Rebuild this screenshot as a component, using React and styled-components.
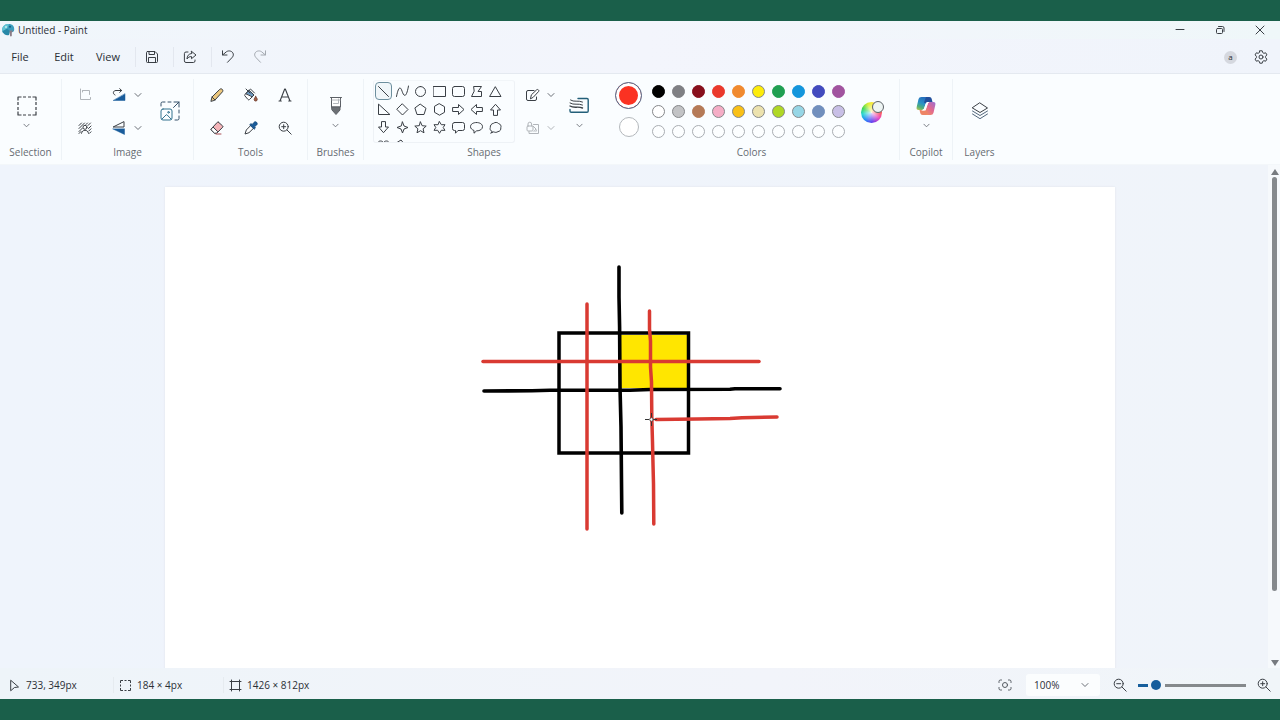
import React from "react";
import styled, { createGlobalStyle } from "styled-components";

const GlobalStyle = createGlobalStyle`
  * { box-sizing: border-box; }
  body { margin: 0; font-family: "Open Sans", "Noto Sans", sans-serif; color: #2b2f36; }
  button, select, input { font: inherit; color: inherit; }
`;

const Desktop = styled.div`
  height: 100vh;
  display: flex;
  flex-direction: column;
  padding: 21px 0;
  background: #1a5f4a;
`;

const AppWindow = styled.div`
  flex: 1;
  min-height: 0;
  display: flex;
  flex-direction: column;
  background: #eff4fa;
`;

const TitleBar = styled.header`
  display: flex;
  align-items: center;
  height: 18px;
  padding-left: 1px;
  gap: 3px;
  background: linear-gradient(90deg, #f0f6fb, #f3f5fc 50%, #eff7f9);
`;

const Title = styled.h1`
  margin: 0;
  flex: 1;
  font-size: 10px;
  line-height: 18px;
  font-weight: 400;
`;

const IconButton = styled.button`
  display: flex;
  align-items: center;
  justify-content: center;
  width: ${(p) => p.$w || 24}px;
  height: ${(p) => p.$h || 24}px;
  padding: 0;
  border: 0;
  background: none;
  flex: none;
  opacity: ${(p) => (p.disabled ? 0.5 : 1)};
`;

const MenuBar = styled.nav`
  display: flex;
  align-items: center;
  height: 34px;
  padding: 2px 7px 0 0;
  background: linear-gradient(90deg, #f0f5fb, #f3f5fc 50%, #f0f4fb);
`;

const MenuButton = styled.button`
  width: 44px;
  padding: 0;
  border: 0;
  background: none;
  font-size: 11px;
  line-height: 20px;
  text-align: center;
`;

const MenuGroup = styled.div`
  display: flex;
  padding: 0 5px 0 0;
  margin-left: ${(p) => p.$start || 0}px;
  border-right: ${(p) => (p.$last ? "0" : "1px solid #e3e7ef")};
`;

const Spacer = styled.div`
  flex: 1;
`;

const Avatar = styled.button`
  width: 13px;
  height: 13px;
  padding: 0;
  margin-right: 12px;
  border: 0;
  border-radius: 50%;
  background: #d5d8df;
  font-size: 8px;
  line-height: 12px;
`;

const Ribbon = styled.section`
  display: flex;
  flex: none;
  height: 92px;
  padding: 5px 0 4px;
  border-top: 1px solid #e4e9f0;
  border-bottom: 1px solid #f3f7fa;
  background: #fafdff;
`;

const Group = styled.div`
  display: flex;
  flex-direction: column;
  gap: 1px;
  flex: none;
  width: ${(p) => p.$w}px;
  border-right: ${(p) => (p.$plain ? "0" : "1px solid #eef3f7")};
`;

const GroupBody = styled.div`
  display: flex;
  align-items: center;
  justify-content: ${(p) => (p.$start ? "flex-start" : "center")};
  gap: ${(p) => p.$gap || 0}px;
  height: 64px;
  padding: 0 ${(p) => p.$right || 0}px 0 ${(p) => p.$start || 0}px;
`;

const GroupLabel = styled.div`
  font-size: 10px;
  line-height: 16px;
  text-align: center;
  color: #666b72;
`;

const Stack = styled.div`
  display: flex;
  flex-direction: column;
  align-items: center;
  gap: ${(p) => p.$gap || 0}px;
  padding-bottom: ${(p) => p.$lift || 0}px;
`;

const ToolGrid = styled.div`
  display: grid;
  grid-template-columns: ${(p) => p.$cols};
  gap: 9px ${(p) => p.$gap || 0}px;
  justify-items: center;
`;

const Split = styled.div`
  display: flex;
`;

const ShapeBox = styled.div`
  align-self: stretch;
  display: grid;
  grid-template-columns: repeat(7, 1fr);
  grid-auto-rows: 18px;
  row-gap: 0;
  width: 142px;
  margin-top: 1px;
  padding: 1px 9px 0 0;
  overflow: hidden;
  border: 1px solid #eef2f6;
  border-top-color: #f2f6f9;
  border-radius: 3px;
`;

const ShapeButton = styled.button`
  display: flex;
  align-items: center;
  justify-content: center;
  padding: 0;
  margin: 0 1px;
  border: 1px solid ${(p) => (p.$on ? "#6d8f9e" : "transparent")};
  border-radius: 4px;
  background: ${(p) => (p.$on ? "#f0f6f9" : "none")};
`;

const CurrentColor = styled.button`
  width: ${(p) => p.$size}px;
  height: ${(p) => p.$size}px;
  padding: 0;
  border: 1px solid ${(p) => p.$line};
  border-radius: 50%;
  background: ${(p) => p.$color};
  box-shadow: inset 0 0 0 ${(p) => p.$ring}px #fff;
`;

const SwatchGrid = styled.div`
  display: grid;
  grid-template-columns: repeat(10, 20px);
  grid-auto-rows: 20px;
  place-items: center;
`;

const Swatch = styled.button`
  width: 13px;
  height: 13px;
  padding: 0;
  border: 1px solid ${(p) => p.$line};
  border-radius: 50%;
  background: ${(p) => p.$color};
`;

const Workspace = styled.main`
  flex: 1;
  min-height: 0;
  display: grid;
  grid-template-columns: 12px 1fr 12px;
  background: linear-gradient(90deg, #eff4fc, #f0f4fa);
`;

const Viewport = styled.div`
  grid-column: 2;
  display: flex;
  justify-content: center;
  align-items: flex-start;
  min-height: 0;
  padding-top: 22px;
  overflow: hidden;
`;

const Drawing = styled.svg`
  width: 100%;
  max-width: 950px;
  height: auto;
  background: #fff;
  flex: none;
  box-shadow: 0 0 2px #dfe4ea;
`;

const ScrollBar = styled.div`
  display: flex;
  flex-direction: column;
  align-items: center;
  gap: 2px;
  padding: 4px 0 2px 1px;
  background: #f6f9fc;
`;

const ScrollTrack = styled.div`
  flex: 1;
  width: 5px;
`;

const ScrollThumb = styled.div`
  width: 5px;
  height: 86%;
  border-radius: 3px;
  background: #85898d;
`;

const StatusBar = styled.footer`
  display: flex;
  align-items: center;
  flex: none;
  height: 31px;
  padding: 3px 5px 0 8px;
  background: linear-gradient(90deg, #eef4f9, #f2f4fa 60%, #f0f5f9);
  font-size: 10px;
  line-height: 16px;
`;

const StatusItem = styled.div`
  display: flex;
  align-items: center;
  gap: 5px;
  width: ${(p) => p.$w}px;
  padding-left: ${(p) => p.$pad || 0}px;
  border-left: ${(p) => (p.$pad ? "1px solid #e6ebf0" : "0")};
`;

const SelectWrap = styled.label`
  display: grid;
  align-items: center;
  width: 74px;
  height: 22px;
  margin: 0 9px 0 8px;
  border-radius: 3px;
  background: #fbfdfe;
  > * { grid-area: 1 / 1; }
  > svg { justify-self: end; margin-right: 11px; pointer-events: none; }
`;

const ZoomSelect = styled.select`
  width: 100%;
  height: 22px;
  padding: 0 0 0 8px;
  border: 0;
  background: none;
  appearance: none;
`;

const ZoomSlider = styled.input`
  width: 108px;
  height: 12px;
  margin: 0 7px;
  appearance: none;
  border-radius: 2px;
  background: linear-gradient(90deg, #175e9c 10px, transparent 10px, transparent 27px, #85898c 27px) center / 100% 3px no-repeat;
  &::-webkit-slider-thumb {
    appearance: none;
    width: 10px;
    height: 10px;
    border-radius: 50%;
    background: #175e9c;
  }
`;

const Glyph = ({ s = 16, box = s, w = 1, color = "#3a3f45", children }) => (
  <svg width={s} height={s} viewBox={`0 0 ${box} ${box}`} fill="none" stroke={color} strokeWidth={w}
    strokeLinecap="round" strokeLinejoin="round" aria-hidden="true">
    {children}
  </svg>
);

const Chevron = ({ s = 8, color = "#6a6f76" }) => (
  <Glyph s={s} box={8} color={color}><path d="M1 2.500 4 5.500 7 2.500" /></Glyph>
);

const PaintLogo = () => (
  <svg width="14" height="14" viewBox="0 0 14 14" aria-hidden="true">
    <path d="M7.500 1C11 .8 13.500 3 13.200 6.500c-.1 2-1 2.500-2.200 2.700L7 8 2 10C.8 8 .8 5.500 2.200 3.500 3.500 1.800 5.500 1 7.500 1z" fill="#3b9dbd" />
    <path d="M2.200 3.500C3.800 1.400 6 .8 8 1L6 6 1.400 8C1 6.400 1.200 4.900 2.200 3.500z" fill="#62c5d4" />
    <path d="M1.500 8.500 6 5.500l3 3-1 3.500c-3 .8-5.500-1-6.500-3.500z" fill="#2889a8" />
    <path d="M8.500 7.500h3.500L10.800 9.500v3c0 1.200-1.800 1.200-1.800 0z" fill="#8a7c86" />
    <circle cx="5" cy="4" r="1" fill="#c9eef2" />
    <circle cx="9" cy="3.800" r="1" fill="#175c85" />
  </svg>
);

const SaveIcon = () => (
  <Glyph s={14}>
    <path d="M2.500 1.500h7.500l2.500 2.500v7.500a1 1 0 0 1-1 1h-9a1 1 0 0 1-1-1v-9a1 1 0 0 1 1-1z" />
    <path d="M4 1.500v3h5.500v-3M3.500 12.500V7.500h7v5" />
  </Glyph>
);
const ShareIcon = () => (
  <Glyph s={14}>
    <path d="M5 2H3a1.600 1.600 0 0 0-1.600 1.600v7.300A1.600 1.600 0 0 0 3 12.500h7.400a1.600 1.600 0 0 0 1.600-1.600V10" />
    <path d="M8.500 1.300 13 5 8.500 8.700V6.600C6.500 6.500 5 7.300 4 9c0-3 1.700-5.300 4.500-5.500z" />
  </Glyph>
);
const UndoIcon = ({ flip }) => (
  <Glyph s={14} color={flip ? "#a4a9b0" : "#3a3f45"}>
    <g transform={flip ? "matrix(-1 0 0 1 14 0)" : undefined}>
      <path d="M1.500 .8V5H6M1.800 4.800 5.500 1.700C8 0 11.800 1.200 12.300 4.100c.2 1.600-.5 2.700-1.500 3.700L6.500 12.300" />
    </g>
  </Glyph>
);
const GearIcon = () => (
  <Glyph s={14}>
    <circle cx="7" cy="7" r="2" />
    <path d="M5.800.8h2.400l.5 1.800 1.200.7 1.800-.5 1.200 2.100L11.600 6.300v1.400l1.300 1.400-1.200 2.100-1.800-.5-1.200.7-.5 1.800H5.800l-.5-1.800-1.200-.7-1.800.5-1.200-2.100 1.300-1.400V6.300L1.100 4.900l1.200-2.100 1.800.5 1.200-.7z" />
  </Glyph>
);

const SelectIcon = () => (
  <Glyph s={20}>
    <path strokeWidth="1.200" strokeLinecap="butt" d="M1 4.500V1h3.500M6 1h3M11 1h3M15.500 1H19v3.500M19 6v3M19 11v3M19 15.500V19h-3.500M14 19h-3M9 19H6M4.500 19H1v-3.500M1 14v-3M1 9V6" />
  </Glyph>
);
const CropIcon = () => (
  <Glyph s={14} color="#6b7077"><path d="M2.500 1v10.500H12.500V9.500M5 2.500h6.500v4M4.500 2.500V4" /></Glyph>
);
const RotateIcon = () => (
  <Glyph s={14}>
    <path d="M13 6v6.500H1.500z" fill="#195c9b" stroke="#195c9b" strokeWidth=".5" />
    <path d="M3 7C.3 5.800 1 2.500 4 2.500h5.500M7.700.7 9.700 2.500 7.700 4.300" />
  </Glyph>
);
const FlipIcon = () => (
  <Glyph s={14}>
    <path d="M12 1v5H1.500z" />
    <path d="M12.500 8v5.500L1 8z" fill="#195c9b" stroke="#195c9b" strokeWidth=".5" />
  </Glyph>
);
const RemoveBgIcon = () => (
  <Glyph s={14}>
    <path d="M1 4.500 3.500 2M1 7.500 6.500 2M1 10.500l3.500-3.500M8 3.500 9.500 2M10 4.500 12.500 2M10.500 7.500 13 5M10.800 10l2.200-2.200M1 12.500l2-2M11.500 12.300l1.500-1.500" />
    <circle cx="7" cy="6.300" r="2" fill="#fff" />
    <path d="M3.500 12.300c.4-2 1.700-3 3.500-3s3.100 1 3.500 3" />
  </Glyph>
);
const ResizeIcon = () => (
  <Glyph s={20} color="#35506a">
    <path d="M1 5V2.500A1.500 1.500 0 0 1 2.500 1H5M8 1h3M19 9v3M19 15v2.500a1.500 1.500 0 0 1-1.500 1.500H15" />
    <path d="M14 1H19v5M19 1l-5.500 5.500" />
    <g stroke="#32738f">
      <rect x="1" y="8" width="11" height="11" rx="2" />
      <path d="M2 18l4-4c.4-.4.8-.4 1.200 0L11 18" /><circle cx="8.500" cy="11.300" r=".8" />
    </g>
  </Glyph>
);
const PencilIcon = () => (
  <Glyph s={14}>
    <path d="M1 13l1-4L9.700 1.400c.8-.8 1.900-.7 2.600 0s.8 1.800 0 2.600L5 12z" fill="#ecc77d" />
    <path d="M2 9l3 3" />
  </Glyph>
);
const BucketIcon = () => (
  <Glyph s={14}>
    <path d="M5 2.500 10 7 5.500 11.500c-.5.5-1 .5-1.500 0L1 8c-.5-.5-.4-1 0-1.500z" fill="#fff" />
    <path d="M2 5.500 5 2.500l5 4.500-1.500 1.500z" fill="#6d9bc4" />
    <path d="M2 1l4 4M5 2.500 6.500 1l4 4" />
    <path d="M11.700 8.500c.8 1.300 1.500 2 1.500 3a1.500 1.500 0 0 1-3 0c0-1 .7-1.700 1.500-3z" fill="#a35e45" stroke="#764536" />
  </Glyph>
);
const TextIcon = () => (
  <Glyph s={14} w={1.1}><path d="M2 13 6.700 1h.6L12 13M3.800 9h6.400M1 13h2.300M10.700 13H13" /></Glyph>
);
const EraserIcon = () => (
  <Glyph s={14}>
    <path d="M8.600 1.300 12.700 5c.4.400.4.800 0 1.200L7 12H4.500L1.300 9c-.4-.4-.4-.8 0-1.200l6-6.500c.4-.4.9-.4 1.300 0z" fill="#f4b4b9" />
    <path d="M1.300 8 3 6l4.900 4.800L6.500 12.200h-2L1.300 9z" fill="#fff" /><path d="M6 13h5" stroke="#a84b50" />
  </Glyph>
);
const DropperIcon = () => (
  <Glyph s={14}>
    <path d="M7 4.200 2.300 9 1 13l4-1.300L9.800 7z" fill="#fff" />
    <path d="M6 3.500l1-.8 1.200.9L10 1.400c1.800-1.700 4.300.8 2.600 2.600l-2.200 1.800 1 1.200-1 1z" fill="#195c9b" stroke="#184e80" />
  </Glyph>
);
const MagnifierIcon = ({ minus }) => (
  <Glyph s={14}>
    <circle cx="5.700" cy="5.700" r="4.500" /><path d="M9 9l4.200 4.200M3.700 5.700h4" />{!minus && <path d="M5.700 3.700v4" />}
  </Glyph>
);
const BrushIcon = () => (
  <Glyph s={20} color="#5c6066">
    <path d="M4.500 1.500h11M5.500 1.500V11h9V1.500" fill="#fff" /><path d="M6 4h8M7.500 7.500h5V3" stroke="#b4b8bd" />
    <path d="M6 11h8v3l-4 4.500L6 14z" fill="#6c7075" />
  </Glyph>
);
const OutlineIcon = () => (
  <Glyph s={16}>
    <path d="M9 3.500H3A1.500 1.500 0 0 0 1.500 5v7A1.500 1.500 0 0 0 3 13.500h7a1.500 1.500 0 0 0 1.500-1.500v-2" />
    <path d="M5.500 11.500l.9-3.700 5.300-5c1-1 2.900.7 1.900 1.700L8.500 10z" fill="#fff" />
  </Glyph>
);
const FillIcon = () => (
  <Glyph s={16} color="#6b7077">
    <path d="M8.500 4.500h5v9H4V11.500" /><rect x="2" y="6" width="6" height="5" rx="1" />
    <path d="M3 6V4a1.800 1.800 0 0 1 3.600 0v2M8 6l3 3-2 2.500M11 9.500c.7 1 .7 2 0 2" />
  </Glyph>
);
const SizeIcon = () => (
  <Glyph s={20} color="#235f79">
    <path strokeWidth="1.400" d="M9 2.500h9a1.200 1.200 0 0 1 1.200 1.200V15A1.200 1.200 0 0 1 18 16.200H2.200A1.200 1.200 0 0 1 1 15V13.500" />
    <g stroke="#3b4046"><path d="M1.500 4c3.500 2.500 7.500 0 12 2M1 7c4 2.500 8 0 12.500 2" /><path strokeWidth="1.400" d="M1 10c4 2.500 8 0 12.500 2" /></g>
  </Glyph>
);
const LayersIcon = () => (
  <Glyph s={18}>
    <path d="M9 1 16.500 6 9 10.500 1.500 6z" /><path d="M1.500 9 9 13.500 16.500 9M1.500 12 9 16.700 16.500 12" stroke="#52677c" />
  </Glyph>
);
const CopilotIcon = () => (
  <svg width="20" height="20" viewBox="0 0 20 20" aria-hidden="true">
    <defs>
      <linearGradient id="copilotStart" x1="0" y1="1" x2="0.4" y2="0">
        <stop offset="0" stopColor="#c3c94c" /><stop offset=".3" stopColor="#4dae7c" /><stop offset=".6" stopColor="#2a91c6" /><stop offset="1" stopColor="#2671bd" />
      </linearGradient>
      <linearGradient id="copilotEnd" x1="1" y1="0" x2="0.1" y2="1">
        <stop offset="0" stopColor="#9a6fd4" /><stop offset=".5" stopColor="#e2688f" /><stop offset="1" stopColor="#f2965a" />
      </linearGradient>
    </defs>
    <path d="M5.500 1h7l-1.700 3.800L8.300 12c-.5 1.400-1.200 2-2.700 2H2.700C.8 14 .2 12.700.7 11l1.700-7.500C2.900 1.800 3.800 1 5.500 1z" fill="url(#copilotStart)" />
    <path d="M10 1h3.300c1.500 0 2.100.8 2.500 2.200l.7 2.800H12c-1.200 0-1.900.6-2.400 1.600L8 6.500z" fill="#224f9c" />
    <path d="M14.500 19h-7l1.700-3.800L11.700 8c.5-1.400 1.200-2 2.700-2h2.900c1.900 0 2.500 1.300 2 3l-1.700 7.500c-.5 1.700-1.400 2.500-3.100 2.500z" fill="url(#copilotEnd)" />
    <path d="M10 19H6.700c-1.500 0-2.100-.8-2.500-2.200L3.500 14H6c2.500 0 3 1 4.500.5l1 1z" fill="#ee8465" />
    <path d="M9.700 7.600C10.200 6.500 11 6 12 6h2.400c-1.500 0-2.200.6-2.700 2L10 13c-.3.900-1.300 1.700-2.500 1.700-1 0-2-.1-2.400-.7.9 0 2.100 0 2.900-1.500z" fill="#fafdff" />
  </svg>
);
const Wheel = styled.span`
  position: relative;
  width: 21px;
  height: 21px;
  margin-top: 2px;
  border-radius: 50%;
  background: radial-gradient(circle, #ffffffd8 0, #fff0 65%),
    conic-gradient(#f4ec36, #ff5a36 80deg, #ee49bd 125deg, #653bee 175deg, #2587f7 220deg, #20d4d1 260deg, #39d653 295deg, #d4ed31 335deg, #f4ec36);
  &::after {
    content: "";
    position: absolute;
    top: -1px;
    right: -2px;
    width: 10px;
    height: 10px;
    border: 1px solid #5c6268;
    border-radius: 50%;
    background: #eef5f4;
  }
`;

const shapes = [
  ["Line", "M1.500 1.500l10 10"],
  ["Curve", "M.5 11.500C2.500 1 4.500 1.500 6 6s4 9 6.500-5"],
  ["Oval", "M6.500 1.500a5 5 0 1 1 0 10 5 5 0 0 1 0-10z"],
  ["Rectangle", "M.5 1.500h12v10H.5z"],
  ["Rounded rectangle", "M2.500 1.500h8a2 2 0 0 1 2 2v6a2 2 0 0 1-2 2h-8a2 2 0 0 1-2-2v-6a2 2 0 0 1 2-2z"],
  ["Polygon", "M4 1.500h7.500L8 6.500h3.500v5H1.500L4 6.500z"],
  ["Triangle", "M6.500 2 12 11.500H1z"],
  ["Right triangle", "M1.500 1.500v10h11z"],
  ["Diamond", "M6.500 1 12 6.500l-5.500 5.500L1 6.500z"],
  ["Pentagon", "M6.500 1.300 12 5.300l-2 6.200H3L1 5.300z"],
  ["Hexagon", "M6.500.8l5 2.900v5.600l-5 2.900-5-2.900V3.700z"],
  ["Right arrow", "M1 4.500h5.500V1.500l5.500 5-5.500 5v-3H1z"],
  ["Left arrow", "M12 4.500H6.500V1.500L1 6.500l5.500 5v-3H12z"],
  ["Up arrow", "M4.500 12V7h-3l5-5.700 5 5.700h-3v5z"],
  ["Down arrow", "M4.500 1v5h-3l5 5.700 5-5.700h-3V1z"],
  ["Four-point star", "M6.500 1 8 5l4 1.500L8 8l-1.500 4L5 8 1 6.500 5 5z"],
  ["Five-point star", "M6.500 1l1.600 3.700 4.100.4-3.100 2.700.9 4-3.500-2.100L3 11.800l.9-4L.8 5.100l4.100-.4z"],
  ["Six-point star", "M6.500.7l1.800 3h3.700L10.200 6.500 12 9.300H8.300l-1.800 3-1.800-3H1l1.800-2.800L1 3.700h3.700z"],
  ["Rounded callout", "M2.500 1.500h8a2 2 0 0 1 2 2V7.500a2 2 0 0 1-2 2H6l-2.500 2.700V9.500h-1a2 2 0 0 1-2-2v-4a2 2 0 0 1 2-2z"],
  ["Oval callout", "M6.500 1.500c3.500 0 6 1.700 6 4.200s-2.500 4.200-6 4.200L4 12.200V9.500C2 8.700.5 7.500.5 5.700c0-2.500 2.500-4.200 6-4.200z"],
  ["Cloud callout", "M3 10.500C1 9.500.8 8 1.300 6.500 1 4.500 2.500 2.500 4.500 2.300 6 1 8.500 1.200 9.500 2.500c2 .5 3 2.500 2.300 4.200.3 2-.9 3.800-2.800 3.900-1.500 1-3 1-4.200.2L2 12z"],
  ["Heart", "M6.500 11.500C-1.500 6 .5 2 3.500 2c1.500 0 2.500.7 3 2 .5-1.300 1.500-2 3-2 3 0 5 4-3 9.500z"],
  ["Lightning", "M1 3.500 5 1l2.500 3 1-.3 2 3 .8-.2L12.500 12 6.800 8.200l1-.4L4.200 5.700l1-.7z"],
];

const palette = [
  ["Black", "#000"], ["Gray", "#7f8084"], ["Dark red", "#870f1c"], ["Red", "#ea392c"], ["Orange", "#f08a2f"],
  ["Yellow", "#fdec0a"], ["Green", "#1f9f52"], ["Turquoise", "#1496dc"], ["Indigo", "#424bbe"], ["Purple", "#a1549f"],
  ["White", "#fff"], ["Light gray", "#c2c3c5"], ["Brown", "#b57a57"], ["Rose", "#f5adc6"], ["Gold", "#f9c016"],
  ["Light yellow", "#ece2ae"], ["Lime", "#b0d825"], ["Light turquoise", "#96d6e6"], ["Blue gray", "#718fbd"], ["Lavender", "#c8bfe6"],
];
const outlined = ["Yellow", "White", "Light gray", "Rose", "Gold", "Light yellow", "Lime", "Light turquoise", "Lavender"];

const WithChevron = ({ label, icon, disabled, w, cw }) => (
  <Split>
    <IconButton $w={w} aria-label={label} disabled={disabled}>{icon}</IconButton>
    <IconButton $w={cw} aria-label={`${label} options`} disabled={disabled}><Chevron /></IconButton>
  </Split>
);

const TallTool = ({ label, icon, w = 28 }) => (
  <Stack>
    <IconButton $w={w} $h={28} aria-label={label}>{icon}</IconButton>
    <IconButton $w={w} $h={10} aria-label={`${label} options`}><Chevron s={7} /></IconButton>
  </Stack>
);

export default function App() {
  return (
    <Desktop>
      <GlobalStyle />
      <AppWindow>
        <TitleBar>
          <PaintLogo />
          <Title>Untitled - Paint</Title>
          <Split>
            <IconButton $w={40} $h={18} aria-label="Minimize"><Glyph s={10}><path d="M1 4.500h8" /></Glyph></IconButton>
            <IconButton $w={40} $h={18} aria-label="Restore">
              <Glyph s={10}><rect x="1.500" y="3.500" width="6" height="5" rx="1" /><path d="M3.500 1.500h4a1.500 1.500 0 0 1 1.500 1.500v3.500" /></Glyph>
            </IconButton>
            <IconButton $w={40} $h={18} aria-label="Close"><Glyph s={10}><path d="M1 1l8 8M9 1 1 9" /></Glyph></IconButton>
          </Split>
        </TitleBar>

        <MenuBar>
          <MenuGroup $start={-2}>
            <MenuButton>File</MenuButton>
            <MenuButton>Edit</MenuButton>
            <MenuButton>View</MenuButton>
          </MenuGroup>
          <MenuGroup><IconButton $w={32} $h={20} aria-label="Save"><SaveIcon /></IconButton></MenuGroup>
          <MenuGroup><IconButton $w={32} $h={20} aria-label="Share"><ShareIcon /></IconButton></MenuGroup>
          <MenuGroup $last>
            <IconButton $w={32} $h={20} aria-label="Undo"><UndoIcon /></IconButton>
            <IconButton $w={32} $h={20} aria-label="Redo"><UndoIcon flip /></IconButton>
          </MenuGroup>
          <Spacer />
          <Avatar aria-label="Account">a</Avatar>
          <IconButton $h={20} aria-label="Settings"><GearIcon /></IconButton>
        </MenuBar>

        <Ribbon>
          <Group $w={62}>
            <GroupBody $right={8}><TallTool label="Selection" icon={<SelectIcon />} /></GroupBody>
            <GroupLabel>Selection</GroupLabel>
          </Group>
          <Group $w={132}>
            <GroupBody $gap={12} $right={2}>
              <ToolGrid $cols="30px 38px" $gap={6}>
                <IconButton aria-label="Crop" disabled><CropIcon /></IconButton>
                <WithChevron label="Rotate" icon={<RotateIcon />} w={26} cw={12} />
                <IconButton aria-label="Remove background"><RemoveBgIcon /></IconButton>
                <WithChevron label="Flip" icon={<FlipIcon />} w={26} cw={12} />
              </ToolGrid>
              <IconButton $w={28} $h={28} aria-label="Resize"><ResizeIcon /></IconButton>
            </GroupBody>
            <GroupLabel>Image</GroupLabel>
          </Group>
          <Group $w={114}>
            <GroupBody>
              <ToolGrid $cols="repeat(3, 24px)" $gap={10}>
                <IconButton aria-label="Pencil"><PencilIcon /></IconButton>
                <IconButton aria-label="Fill"><BucketIcon /></IconButton>
                <IconButton aria-label="Text"><TextIcon /></IconButton>
                <IconButton aria-label="Eraser"><EraserIcon /></IconButton>
                <IconButton aria-label="Color picker"><DropperIcon /></IconButton>
                <IconButton aria-label="Magnifier"><MagnifierIcon /></IconButton>
              </ToolGrid>
            </GroupBody>
            <GroupLabel>Tools</GroupLabel>
          </Group>
          <Group $w={56}>
            <GroupBody><TallTool label="Brushes" icon={<BrushIcon />} /></GroupBody>
            <GroupLabel>Brushes</GroupLabel>
          </Group>
          <Group $w={240} $plain>
            <GroupBody $start={9} $gap={8}>
              <ShapeBox>
                {shapes.map(([name, d], i) => (
                  <ShapeButton key={name} $on={i === 0} aria-label={name}>
                    <Glyph s={13}><path d={d} /></Glyph>
                  </ShapeButton>
                ))}
              </ShapeBox>
              <Stack $gap={9}>
                <WithChevron label="Shape outline" icon={<OutlineIcon />} w={20} cw={16} />
                <WithChevron label="Shape fill" icon={<FillIcon />} w={20} cw={16} disabled />
              </Stack>
              <TallTool label="Size" icon={<SizeIcon />} w={24} />
            </GroupBody>
            <GroupLabel>Shapes</GroupLabel>
          </Group>
          <Group $w={296}>
            <GroupBody $start={11} $gap={6}>
              <Stack $gap={8} $lift={4}>
                <CurrentColor $size={27} $line="#4c7194" $color="#fb3222" $ring={3} aria-label="Color 1" />
                <CurrentColor $size={20} $line="#b4b8bc" $color="#fff" $ring={0} aria-label="Color 2" />
              </Stack>
              <SwatchGrid>
                {palette.map(([name, c]) => (
                  <Swatch key={name} $color={c} $line={outlined.includes(name) ? "#85878a" : c} aria-label={name} />
                ))}
                {Array.from({ length: 10 }, (_, i) => (
                  <Swatch key={i} $color="#fcfeff" $line="#a9adb2" aria-label={`Custom color ${i + 1}`} />
                ))}
              </SwatchGrid>
              <IconButton $w={34} $h={28} aria-label="Edit colors"><Wheel /></IconButton>
            </GroupBody>
            <GroupLabel>Colors</GroupLabel>
          </Group>
          <Group $w={53}>
            <GroupBody><TallTool label="Copilot" icon={<CopilotIcon />} /></GroupBody>
            <GroupLabel>Copilot</GroupLabel>
          </Group>
          <Group $w={53} $plain>
            <GroupBody><IconButton $w={28} $h={28} aria-label="Layers"><LayersIcon /></IconButton></GroupBody>
            <GroupLabel>Layers</GroupLabel>
          </Group>
        </Ribbon>

        <Workspace>
          <Viewport>
            <Drawing viewBox="165 187 950 541" fill="none" strokeLinecap="round" strokeLinejoin="round" role="img" aria-label="Canvas">
              <path d="M621 335h66v53h-66z" fill="#ffe600" />
              <rect x="559" y="333" width="129.500" height="120" stroke="#000" strokeWidth="3.500" strokeLinejoin="miter" />
              <g stroke="#000" strokeWidth="3.600">
                <path d="M619 267v30l.6 30 .4 60 1 40 .5 55 .3 31" />
                <path d="M484 391l48-.2 18-.6h80l20-.7 80-.2 5-.6h45" />
              </g>
              <g stroke="#d93a32" strokeWidth="3.500">
                <path d="M587 304v225" />
                <path d="M483 361.500h276" />
                <path d="M649.500 311v18l1 12v26l1 15 .3 35 .7 25 .5 22 .5 20 .3 40" />
                <path d="M656 419.500l41-.5 33-.6 12-.7 35-.7" />
              </g>
              <path d="M645 419.500h4M654 419.500h3M651.500 413v4M651.500 422v4" stroke="#333" strokeWidth="1" strokeLinecap="butt" />
              <circle cx="651.500" cy="419.500" r="1.800" fill="#fff" stroke="#333" strokeWidth=".8" />
            </Drawing>
          </Viewport>
          <ScrollBar>
            <svg width="8" height="6" viewBox="0 0 8 6" aria-hidden="true"><path d="M4 0l4 6H0z" fill="#777b80" /></svg>
            <ScrollTrack><ScrollThumb /></ScrollTrack>
            <svg width="8" height="6" viewBox="0 0 8 6" aria-hidden="true"><path d="M4 6l4-6H0z" fill="#777b80" /></svg>
          </ScrollBar>
        </Workspace>

        <StatusBar>
          <StatusItem $w={105}>
            <Glyph s={13}><path d="M3 1.500 10.500 8l-4 .5L3 11.500z" /></Glyph>733, 349px
          </StatusItem>
          <StatusItem $w={110} $pad={5}>
            <Glyph s={13}>
              <path strokeLinecap="butt" d="M1.500 4V1.500H4M5.500 1.500h2M9 1.500h2.500V4M11.500 5.500v2M11.500 9v2.500H9M7.500 11.500h-2M4 11.500H1.500V9M1.500 7.500v-2" />
            </Glyph>184 × 4px
          </StatusItem>
          <StatusItem $w={110} $pad={5}>
            <Glyph s={13}><path d="M2.500 1v11M10.500 1v11M1 2.500h11M1 10.500h11" /></Glyph>1426 × 812px
          </StatusItem>
          <Spacer />
          <IconButton $w={26} aria-label="Fit to window">
            <Glyph s={14} color="#555b62"><circle cx="7" cy="7" r="2.500" /><path d="M1 4.500V3.500A1.500 1.500 0 0 1 2.500 2H3.500M10.500 2h1A1.500 1.500 0 0 1 13 3.500v1M13 9.500v1a1.500 1.500 0 0 1-1.500 1.500h-1M3.500 12h-1A1.500 1.500 0 0 1 1 10.500v-1" /></Glyph>
          </IconButton>
          <SelectWrap>
            <ZoomSelect aria-label="Zoom level" defaultValue="100%"><option>100%</option><option>200%</option></ZoomSelect>
            <Chevron />
          </SelectWrap>
          <IconButton $w={22} aria-label="Zoom out"><MagnifierIcon minus /></IconButton>
          <ZoomSlider type="range" aria-label="Zoom" min="0" max="100" defaultValue="13" />
          <IconButton $w={22} aria-label="Zoom in"><MagnifierIcon /></IconButton>
        </StatusBar>
      </AppWindow>
    </Desktop>
  );
}
